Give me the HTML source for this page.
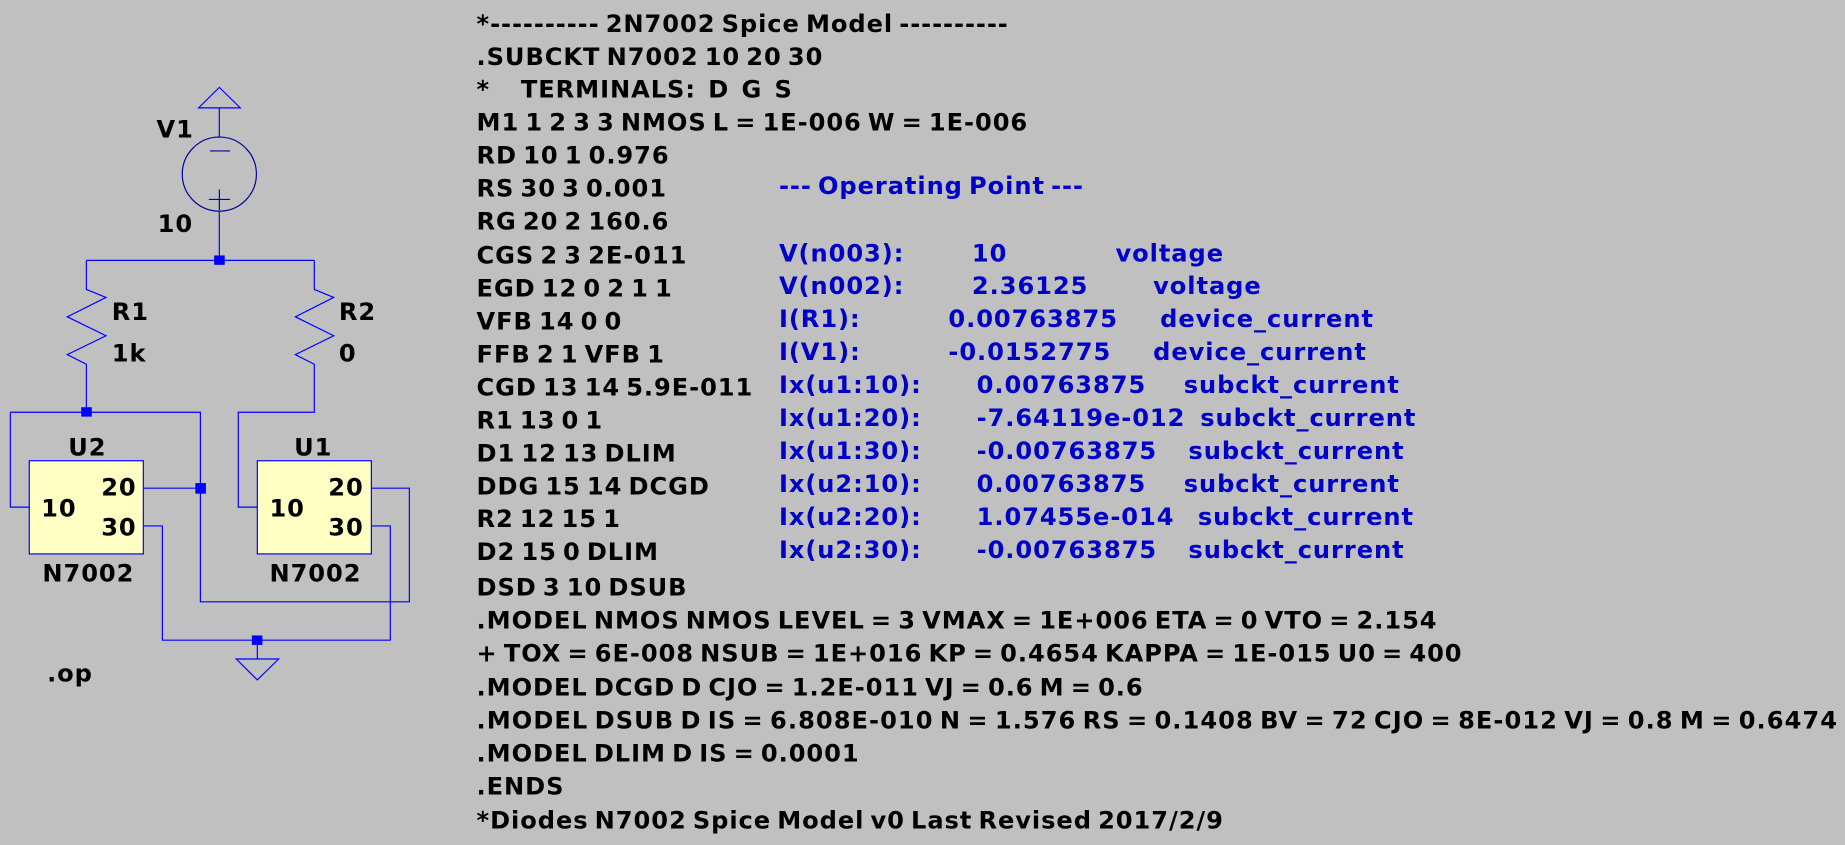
<!DOCTYPE html>
<html><head><meta charset="utf-8"><style>
html,body{margin:0;padding:0;background:#c0c0c0;width:1845px;height:845px;overflow:hidden}
svg{display:block}
text{font-family:"DejaVu Sans","Liberation Sans",sans-serif;font-weight:bold;font-size:20.5px;letter-spacing:0.8px;word-spacing:-2.7px}
.k{fill:#000}.b{fill:#0000c8}
</style></head><body>
<svg width="1845" height="845" viewBox="0 0 1568 718" xmlns="http://www.w3.org/2000/svg">
<g fill="none" stroke="#0000ff" stroke-width="1">
<path d="M186.4 74.2 L168.8 91.6 L204.2 91.6 Z M186.4 91.6 V116.5"/>
<circle cx="186.4" cy="147.9" r="31.5" stroke="#0000a0"/>
<path d="M178.5 128.2 H195.5 M177.5 169.4 H195.5 M186.4 161 V178.6" stroke="#0000a0"/>
<path d="M186.4 179.4 V221.2 M73.4 221.2 H267.1"/>
<path d="M73.4 221.2 V245.9 L90.1 252.7 L57.2 269.2 L90.1 285.3 L57.2 301.3 L73.4 309.5 V350.3"/>
<path d="M267.1 221.2 V245.9 L283.6 252.7 L251 269.2 L283.6 285.3 L251 301.3 L267.1 309.5 V350.3 H202.5 V430.9 H218.7"/>
<path d="M8.8 350.3 H170.3 V511.4 H347.9 V414.8 H315.6"/>
<path d="M8.8 350.3 V430.9 H24.9"/>
<path d="M121.8 414.8 H170.3"/>
<path d="M121.8 446.9 H138 V544 H331.7 V446.9 H315.6"/>
<path d="M218.7 544 V560 M200.8 560 H236.8 L218.7 577.8 Z"/>
<rect x="24.9" y="391.5" width="96.9" height="79.2" fill="#ffffc4"/>
<rect x="218.7" y="391.5" width="96.9" height="79.2" fill="#ffffc4"/>
</g>
<g fill="#0000ff">
<rect x="182" y="217" width="9" height="8"/>
<rect x="69" y="346" width="9" height="8"/>
<rect x="166" y="410.5" width="9" height="9"/>
<rect x="214" y="540" width="9" height="8"/>
</g>
<g class="k">
<text x="133" y="117">V1</text>
<text x="134" y="197">10</text>
<text x="95" y="272">R1</text>
<text x="95" y="307">1k</text>
<text x="288" y="272">R2</text>
<text x="288" y="307">0</text>
<text x="58" y="387">U2</text>
<text x="250" y="387">U1</text>
<text x="35" y="439">10</text>
<text x="86" y="421">20</text>
<text x="86" y="455">30</text>
<text x="36" y="494">N7002</text>
<text x="229" y="439">10</text>
<text x="279" y="421">20</text>
<text x="279" y="455">30</text>
<text x="229" y="494">N7002</text>
<text x="40" y="579">.op</text>
</g>
<g class="k">
<text x="405" y="27">*---------- 2N7002 Spice Model ----------</text>
<text x="405" y="55">.SUBCKT N7002 10 20 30</text>
<text x="405" y="83" xml:space="preserve">*     TERMINALS:  D  G  S</text>
<text x="405" y="111">M1 1 2 3 3 NMOS L = 1E-006 W = 1E-006</text>
<text x="405" y="139">RD 10 1 0.976</text>
<text x="405" y="167">RS 30 3 0.001</text>
<text x="405" y="195">RG 20 2 160.6</text>
<text x="405" y="224">CGS 2 3 2E-011</text>
<text x="405" y="252">EGD 12 0 2 1 1</text>
<text x="405" y="280">VFB 14 0 0</text>
<text x="405" y="308">FFB 2 1 VFB 1</text>
<text x="405" y="336">CGD 13 14 5.9E-011</text>
<text x="405" y="364">R1 13 0 1</text>
<text x="405" y="392">D1 12 13 DLIM</text>
<text x="405" y="420">DDG 15 14 DCGD</text>
<text x="405" y="448">R2 12 15 1</text>
<text x="405" y="476">D2 15 0 DLIM</text>
<text x="405" y="506">DSD 3 10 DSUB</text>
<text x="405" y="534">.MODEL NMOS NMOS LEVEL = 3 VMAX = 1E+006 ETA = 0 VTO = 2.154</text>
<text x="405" y="562">+ TOX = 6E-008 NSUB = 1E+016 KP = 0.4654 KAPPA = 1E-015 U0 = 400</text>
<text x="405" y="591">.MODEL DCGD D CJO = 1.2E-011 VJ = 0.6 M = 0.6</text>
<text x="405" y="619" textLength="1157">.MODEL DSUB D IS = 6.808E-010 N = 1.576 RS = 0.1408 BV = 72 CJO = 8E-012 VJ = 0.8 M = 0.6474</text>
<text x="405" y="647">.MODEL DLIM D IS = 0.0001</text>
<text x="405" y="675">.ENDS</text>
<text x="405" y="704">*Diodes N7002 Spice Model v0 Last Revised 2017/2/9</text>
</g>
<g class="b">
<text x="662" y="165">--- Operating Point ---</text>
<text x="662" y="222">V(n003):</text><text x="826" y="222">10</text><text x="948" y="222">voltage</text>
<text x="662" y="250">V(n002):</text><text x="826" y="250">2.36125</text><text x="980" y="250">voltage</text>
<text x="662" y="278">I(R1):</text><text x="806" y="278">0.00763875</text><text x="986" y="278">device_current</text>
<text x="662" y="306">I(V1):</text><text x="806" y="306">-0.0152775</text><text x="980" y="306">device_current</text>
<text x="662" y="334">Ix(u1:10):</text><text x="830" y="334">0.00763875</text><text x="1006" y="334">subckt_current</text>
<text x="662" y="362">Ix(u1:20):</text><text x="830" y="362">-7.64119e-012</text><text x="1020" y="362">subckt_current</text>
<text x="662" y="390">Ix(u1:30):</text><text x="830" y="390">-0.00763875</text><text x="1010" y="390">subckt_current</text>
<text x="662" y="418">Ix(u2:10):</text><text x="830" y="418">0.00763875</text><text x="1006" y="418">subckt_current</text>
<text x="662" y="446">Ix(u2:20):</text><text x="830" y="446">1.07455e-014</text><text x="1018" y="446">subckt_current</text>
<text x="662" y="474">Ix(u2:30):</text><text x="830" y="474">-0.00763875</text><text x="1010" y="474">subckt_current</text>
</g>
</svg>
</body></html>
